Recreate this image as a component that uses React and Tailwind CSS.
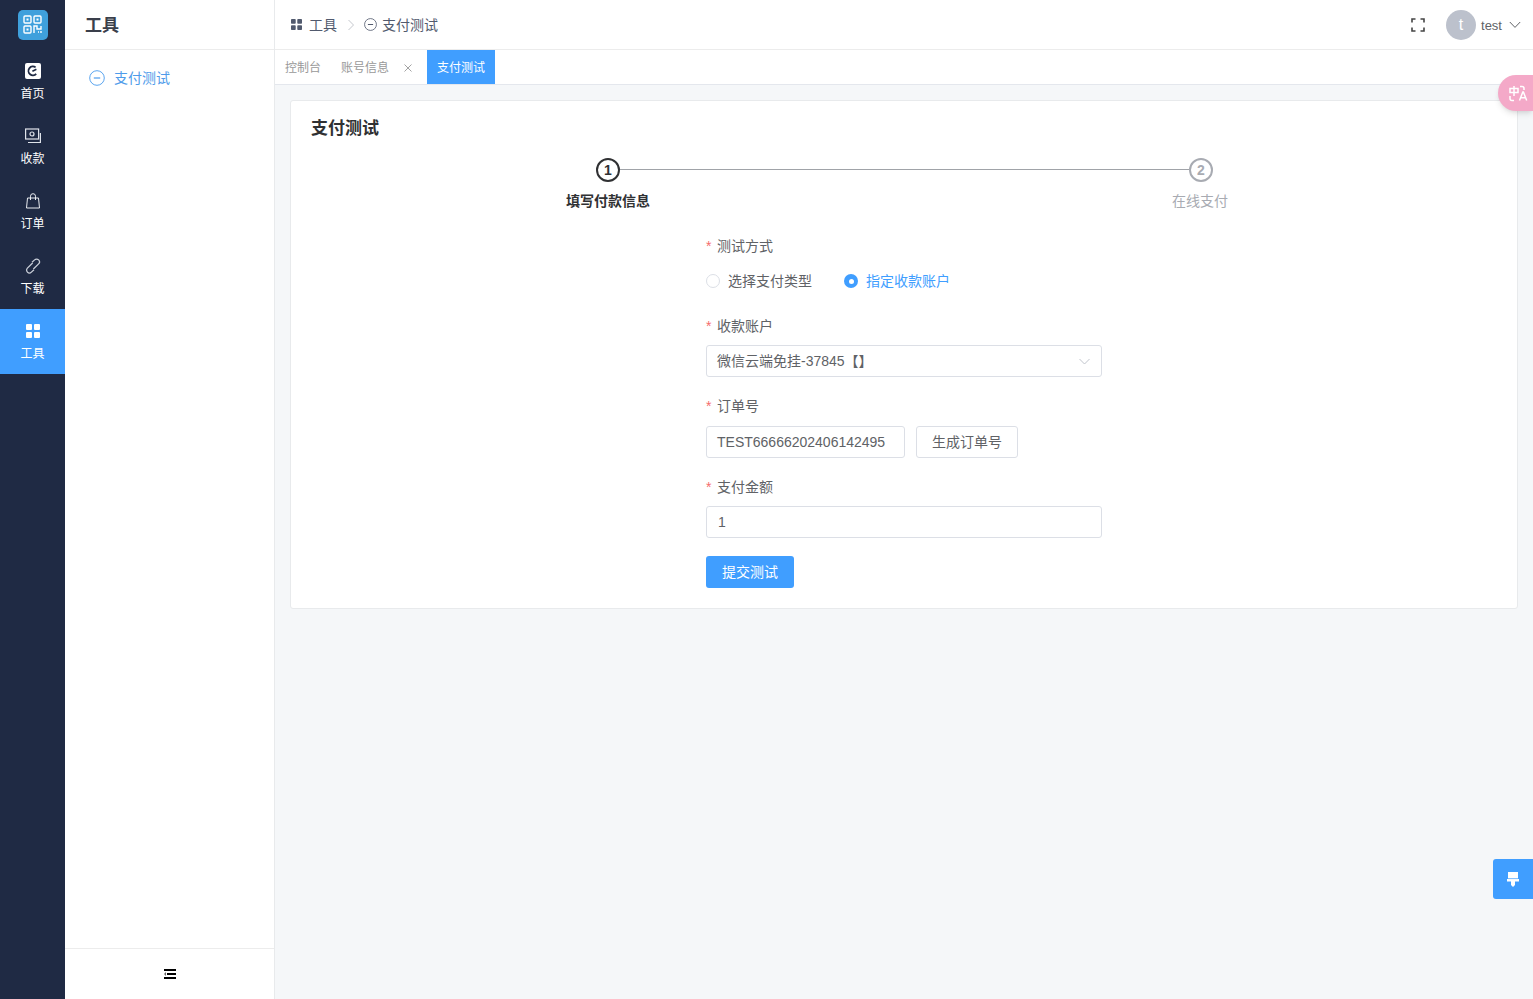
const FONT = '"Liberation Sans","Noto Sans CJK SC",sans-serif';

const NAV = [
  { label: '首页', icon: 'home' },
  { label: '收款', icon: 'money' },
  { label: '订单', icon: 'bag' },
  { label: '下载', icon: 'link' },
  { label: '工具', icon: 'grid', active: true },
];

const GridIcon = ({ className }) => (
  <svg className={className} viewBox="0 0 14 14" fill="currentColor">
    <rect x="0" y="0" width="6" height="6" rx="1" />
    <rect x="8" y="0" width="6" height="6" rx="1" />
    <rect x="0" y="8" width="6" height="6" rx="1" />
    <rect x="8" y="8" width="6" height="6" rx="1" />
  </svg>
);

const MinusCircle = ({ className }) => (
  <svg className={className} viewBox="0 0 16 16" fill="none" stroke="currentColor" strokeWidth="1">
    <circle cx="8" cy="8" r="7.3" />
    <path d="M4.8 8h6.4" strokeWidth="1.3" />
  </svg>
);

const NavIcon = ({ name }) => {
  if (name === 'home') {
    return (
      <svg className="w-4 h-4" viewBox="0 0 16 16">
        <rect width="16" height="16" rx="2" fill="#fff" />
        <path d="M11.2 10.8A4.4 4.4 0 1 1 10.6 4.4" fill="none" stroke="#1f2a44" strokeWidth="1.8" />
        <path d="M7.4 8.2 11.4 6.2" stroke="#1f2a44" strokeWidth="1.6" />
      </svg>
    );
  }
  if (name === 'money') {
    return (
      <svg className="w-4 h-4" viewBox="0 0 16 16" fill="none" stroke="#dfe3ea" strokeWidth="1.2">
        <rect x="0.6" y="1" width="13" height="10" />
        <circle cx="7" cy="6" r="2" />
        <path d="M3 14.5h12.4V5" />
      </svg>
    );
  }
  if (name === 'bag') {
    return (
      <svg className="w-4 h-4" viewBox="0 0 16 16" fill="none" stroke="#e8ebf0" strokeWidth="1">
        <path d="M2.5 5h11l1 10h-13z" />
        <path d="M5.5 7V3.2a2.5 2.5 0 0 1 5 0V7" />
      </svg>
    );
  }
  if (name === 'link') {
    return (
      <svg className="w-4 h-4" viewBox="0 0 16 16" fill="none" stroke="#c9ced8" strokeWidth="1.3">
        <path d="M7 4.2 9.6 1.9a2.8 2.8 0 0 1 4 4L8.4 11" />
        <path d="M9 11.8 6.4 14.1a2.8 2.8 0 0 1-4-4L7.6 5" />
      </svg>
    );
  }
  return <GridIcon className="w-[14px] h-[14px] text-white" />;
};

const FormLabel = ({ children, className }) => (
  <div className={`h-5 flex items-center text-sm text-[#606266] ${className}`}>
    <span className="text-[#f56c6c] mr-[5px] w-[6px]">*</span>
    {children}
  </div>
);

export default function App() {
  return (
    <div className="relative h-[999px] w-[1533px] overflow-hidden flex bg-[#f5f7f9]" style={{ fontFamily: FONT }}>
      <aside className="w-[65px] shrink-0 bg-[#1f2a44] text-white">
        <div className="h-[49px] flex items-center justify-center">
          <div className="w-[30px] h-[30px] rounded-[5px] bg-[#3fa0dc] flex items-center justify-center">
            <svg className="w-[19px] h-[19px]" viewBox="0 0 19 19" fill="none" stroke="#fff" strokeWidth="1.4">
              <rect x="1" y="1" width="7" height="7" rx="1" />
              <rect x="11" y="1" width="7" height="7" rx="1" />
              <rect x="1" y="11" width="7" height="7" rx="1" />
              <path d="M3.5 4.5h2M13.5 4.5h2M3.5 14.5h2" strokeWidth="2" />
              <path d="M11 18v-7h3v3h4v-3M15 17h1M18 16v2" />
            </svg>
          </div>
        </div>
        {NAV.map((item) => (
          <div
            key={item.label}
            className={`h-[65px] flex flex-col items-center pt-[14px] ${item.active ? 'bg-[#409eff]' : ''}`}
          >
            <div className="h-4 flex items-center justify-center">
              <NavIcon name={item.icon} />
            </div>
            <span className="mt-[6px] text-xs leading-[18px]">{item.label}</span>
          </div>
        ))}
      </aside>

      <section className="w-[210px] shrink-0 bg-white border-r border-[#e8eaec] flex flex-col">
        <div className="h-[50px] shrink-0 border-b border-[#ececec] pl-5 pt-[2px] flex items-center text-[17px] font-bold text-[#3a3f4b]">
          工具
        </div>
        <div className="flex-1 pt-[19px] pl-6">
          <div className="flex items-center h-[18px] text-[#4e9bea] text-sm">
            <MinusCircle className="w-4 h-4 mr-[9px] text-[#5ba5ef]" />
            支付测试
          </div>
        </div>
        <div className="h-[51px] shrink-0 border-t border-[#ececec] flex items-center justify-center">
          <svg className="w-3 h-[10px] text-black" viewBox="0 0 12 10" fill="currentColor">
            <rect width="12" height="2" />
            <rect x="3" y="4" width="9" height="2" />
            <rect y="8" width="12" height="2" />
            <path d="M2 3v4L0 5z" fill="#666" />
          </svg>
        </div>
      </section>

      <main className="flex-1 min-w-0 flex flex-col">
        <header className="h-[50px] shrink-0 bg-white border-b border-[#ececec] flex items-center pl-4 pr-3 text-sm text-[#515a6e]">
          <GridIcon className="w-[11px] h-[11px] text-[#515a6e] mr-[7px]" />
          <span>工具</span>
          <svg className="w-[8px] h-[12px] ml-[10px] mr-[9px] text-[#c5c8ce]" viewBox="0 0 8 12" fill="none" stroke="currentColor">
            <path d="m1.5 1 5 5-5 5" />
          </svg>
          <MinusCircle className="w-[13px] h-[13px] mr-[5px] text-[#515a6e]" />
          <span>支付测试</span>
          <div className="ml-auto flex items-center">
            <svg className="w-[14px] h-[14px] mr-[21px] text-[#444]" viewBox="0 0 14 14" fill="none" stroke="currentColor" strokeWidth="1.6">
              <path d="M1 4.5V1h3.5M9.5 1H13v3.5M13 9.5V13H9.5M4.5 13H1V9.5" />
            </svg>
            <div className="w-[30px] h-[30px] rounded-full bg-[#bcc1cc] text-white flex items-center justify-center text-base">t</div>
            <span className="ml-[5px] pt-[3px] text-[13px] text-[#606266]">test</span>
            <svg className="w-3 h-2 ml-[7px] text-[#606266]" viewBox="0 0 12 8" fill="none" stroke="currentColor">
              <path d="m.8 1 5.2 5.4L11.2 1" />
            </svg>
          </div>
        </header>

        <nav className="h-[35px] shrink-0 bg-white border-b border-[#e4e7ed] flex items-stretch text-xs text-[#999]">
          <span className="flex items-center pl-[10px] pr-[10px] pt-[2px]">控制台</span>
          <span className="flex items-center pl-[10px] pr-[10px] pt-[2px]">
            账号信息
            <svg className="w-2 h-2 ml-[15px] text-[#999]" viewBox="0 0 8 8" stroke="currentColor" strokeWidth="0.9">
              <path d="m.5.5 7 7M7.5.5l-7 7" />
            </svg>
          </span>
          <span className="ml-[5px] w-[68px] pt-[2px] bg-[#409eff] text-white flex items-center justify-center">支付测试</span>
        </nav>

        <div className="flex-1 px-[15px] pt-[15px]">
          <div className="h-[509px] bg-white border border-[#e8eaec] rounded-[3px] px-5">
            <h1 className="pt-[18px] h-[57px] text-[17px] leading-[20px] font-bold text-[#303133]">支付测试</h1>

            <div className="w-[617px] ml-[285px] flex items-center">
              <div className="w-6 h-6 rounded-full border-2 border-[#303133] text-[#303133] text-sm font-bold flex items-center justify-center">1</div>
              <div className="flex-1 h-px mb-[2px] bg-[#a0a3a8]" />
              <div className="w-6 h-6 rounded-full border-2 border-[#a8abb2] text-[#a8abb2] text-sm font-bold flex items-center justify-center">2</div>
            </div>
            <div className="w-[716px] ml-[235px] mt-[9px] flex justify-between text-sm leading-5">
              <span className="w-[124px] text-center font-bold text-[#303133]">填写付款信息</span>
              <span className="w-[124px] text-center text-[#a8abb2]">在线支付</span>
            </div>

            <div className="w-[396px] ml-[395px] mt-[25px]">
              <FormLabel>测试方式</FormLabel>
              <div className="h-[34px] mt-2 flex items-center text-sm">
                <span className="w-[14px] h-[14px] rounded-full border border-[#dcdfe6] bg-white" />
                <span className="ml-2 text-[#606266]">选择支付类型</span>
                <span className="ml-[32px] w-[14px] h-[14px] rounded-full bg-[#409eff] flex items-center justify-center">
                  <span className="w-[5px] h-[5px] rounded-full bg-white" />
                </span>
                <span className="ml-2 text-[#409eff]">指定收款账户</span>
              </div>

              <FormLabel className="mt-[18px]">收款账户</FormLabel>
              <div className="mt-[9px] h-8 border border-[#dcdfe6] rounded-[3px] px-[10px] flex items-center justify-between text-sm text-[#606266]">
                <span>微信云端免挂-37845【】</span>
                <svg className="w-[11px] h-[7px] mr-[1px] text-[#c0c4cc]" viewBox="0 0 11 7" fill="none" stroke="currentColor">
                  <path d="m.5 1 5 5 5-5" />
                </svg>
              </div>

              <FormLabel className="mt-[19px]">订单号</FormLabel>
              <div className="mt-[10px] flex gap-[11px]">
                <div className="w-[199px] h-8 border border-[#dcdfe6] rounded-[3px] px-[10px] flex items-center text-sm text-[#606266]">TEST66666202406142495</div>
                <button className="w-[102px] h-8 border border-[#dcdfe6] rounded-[3px] bg-white text-sm text-[#606266]">生成订单号</button>
              </div>

              <FormLabel className="mt-[19px]">支付金额</FormLabel>
              <div className="mt-[9px] h-8 border border-[#dcdfe6] rounded-[3px] px-[11px] flex items-center text-sm text-[#606266]">1</div>

              <button className="mt-[18px] w-[88px] h-8 rounded-[3px] bg-[#409eff] text-white text-sm">提交测试</button>
            </div>
          </div>
        </div>
      </main>

      <div className="absolute top-[75px] right-0 w-[35px] h-[36px] rounded-l-[18px] bg-[#f4a9c8] shadow-md flex items-center justify-start pl-[11px]">
        <svg className="w-[19px] h-[17px] text-white" viewBox="0 0 19 17" fill="none" stroke="currentColor" strokeWidth="1.5">
          <path d="M1 3.5h8v4H1zM5 1v10" />
          <path d="M1 11v2.5a2 2 0 0 0 2 2h2M11 1.5h2a2 2 0 0 1 2 2V5" />
          <path d="m10.5 15.5 3.3-8.5h.6l3.3 8.5M11.8 12.8h4.6" />
        </svg>
      </div>

      <div className="absolute top-[859px] right-0 w-10 h-10 rounded-l-[3px] bg-[#409eff] flex items-center justify-center">
        <svg className="w-[12px] h-[15px] text-white" viewBox="0 0 12 15" fill="currentColor">
          <path d="M1 0h10v7H1zM0 7h12v2.5H0zM4 9.5h4V13l-2 2-2-2z" />
          <path d="M1 6.6h10" stroke="#409eff" strokeWidth="0.7" />
        </svg>
      </div>
    </div>
  );
}
